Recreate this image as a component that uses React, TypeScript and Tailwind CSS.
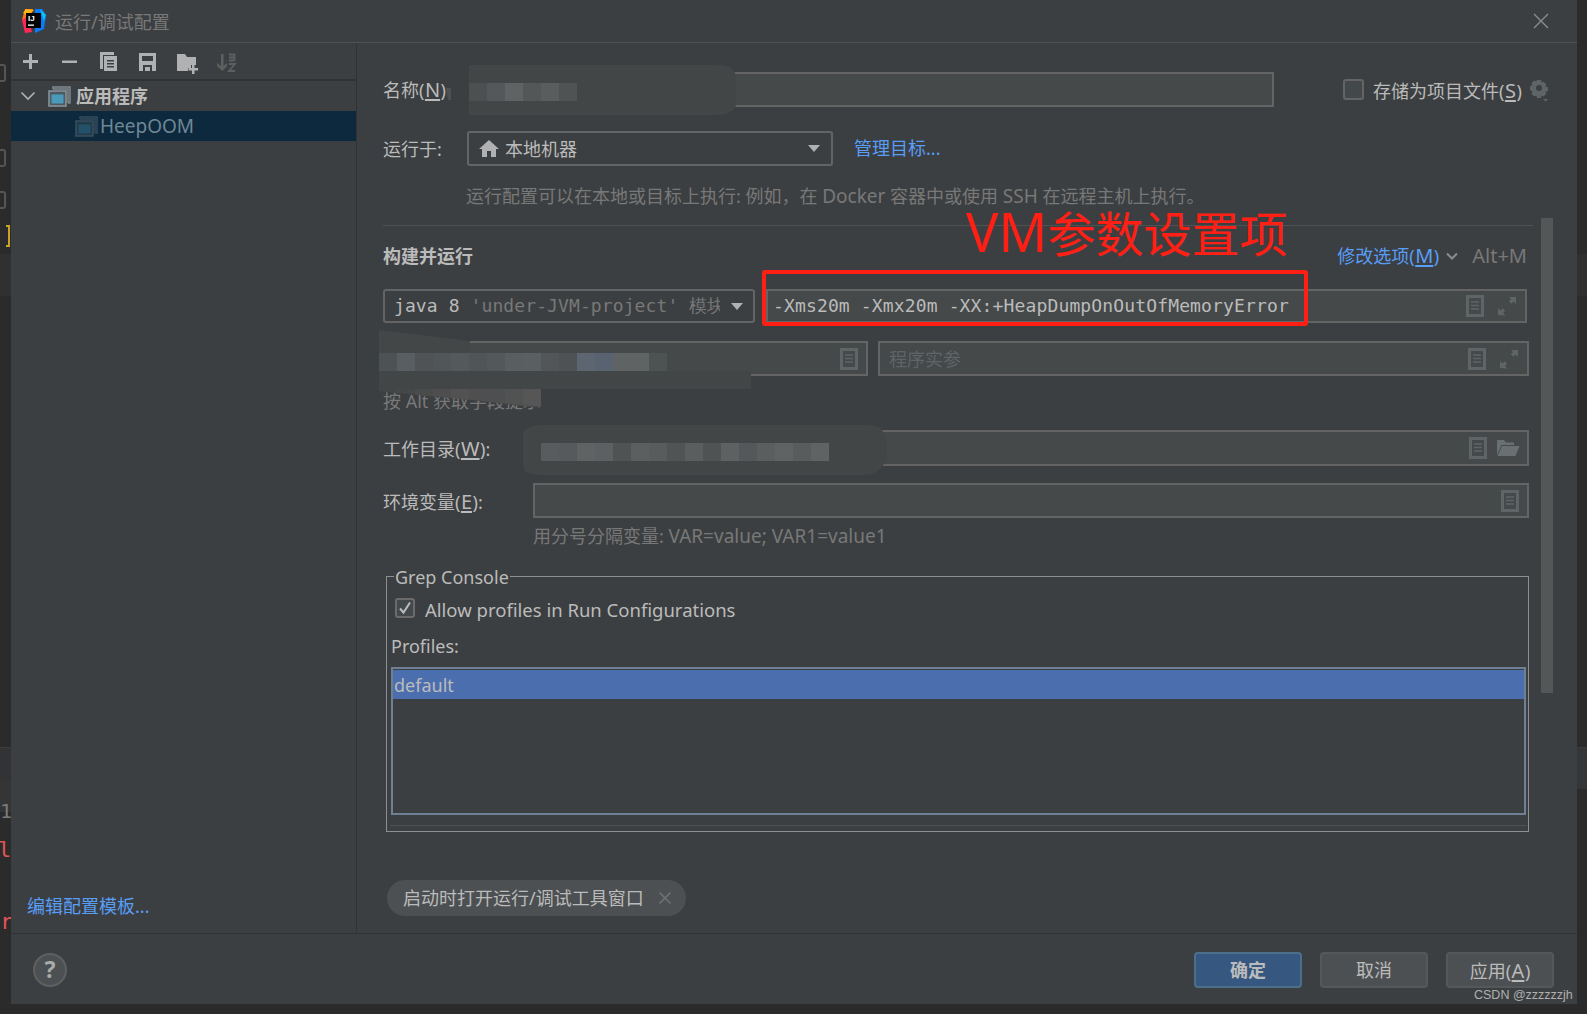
import type { ReactNode } from 'react'

const DocIcon = () => (
  <svg width="18" height="22" viewBox="0 0 18 22" className="shrink-0">
    <rect x="1.5" y="1.5" width="15" height="19" fill="none" stroke="#5f6567" strokeWidth="3" />
    <path d="M5 7h8M5 10.5h8M5 14h8" stroke="#5f6567" strokeWidth="1.5" />
  </svg>
)

const ExpandIcon = () => (
  <svg width="20" height="20" viewBox="0 0 20 20" className="shrink-0">
    <path d="M12 1h7v7l-2.5-2.5-2.2 2.2-2.5-2.5 2.2-2.2zM1 19v-7l2.5 2.5 2.2-2.2 2.5 2.5-2.2 2.2 2.5 2.5z" fill="#5f6567" />
  </svg>
)

const FolderOpenIcon = () => (
  <svg width="24" height="18" viewBox="0 0 24 18" className="shrink-0">
    <path d="M1 16V1h7l2 2.5h8V6H5.5zM6 7h17.500l-4 10H1.500z" fill="#687072" />
  </svg>
)

const Triangle = () => (
  <svg width="14" height="9" viewBox="0 0 14 9" className="shrink-0">
    <path d="M1 1h12L7 8z" fill="#afb1b3" />
  </svg>
)

const AppIcon = ({ dim }: { dim?: boolean }) => (
  <svg width="23" height="21" viewBox="0 0 23 21" className="shrink-0">
    <g opacity={dim ? 0.35 : 1}>
      <path d="M5 3V1h17v16h-2M5 3h15v14" fill="none" stroke="#7f8b91" strokeWidth="1.500" />
      <rect x="1" y="5" width="17" height="15" fill="#4d5a60" stroke="#8a979e" strokeWidth="1.500" />
      <rect x="3.500" y="8.500" width="12" height="9" fill="#4a9bbb" />
    </g>
  </svg>
)

const toolIcons: ReactNode[] = [
  <path key="add" d="M8 2h3v6h6v3h-6v6H8v-6H2V8h6z" fill="#afb1b3" />,
  <path key="remove" d="M2 8.500h15v2.500H2z" fill="#afb1b3" />,
  <path key="copy" fillRule="evenodd" d="M1 0h14v3H4v14H1zM5 4h13v15H5zM8 8v1.500h7V8zm0 3v1.500h7V11zm0 3v1.500h7V14z" fill="#afb1b3" />,
  <path key="save" fillRule="evenodd" d="M1 1h17v18H1zM4 4v5h11V4zm1 9v6h9v-6zm2 2h5v4H7z" fill="#afb1b3" />,
  <path key="folder" d="M0 2h8l2 3h9v8h-5v3h-3v3H0zM15 13h2.500v3H21v2.500h-3.500V22H15v-3.500h-3.500V16H15z" fill="#afb1b3" />,
]

const Toolbar = () => (
  <div className="flex h-[38px] items-center border-b-2 border-[#323232] pt-[3px] pl-px">
    {toolIcons.map((icon, i) => (
      <div key={i} className="flex w-[39px] justify-center">
        <svg width="21" height="22" viewBox="0 0 21 22">
          {icon}
        </svg>
      </div>
    ))}
    <div className="flex w-[39px] justify-center">
      <svg width="21" height="22" viewBox="0 0 21 22">
        <path d="M5 2h2.500v12L11 11v3l-4.700 5L1 14v-3l4 3z" fill="#5e6060" />
        <path d="M13 2.500h5.500v6M13 5.500h5.500M13 8.500h5.500M13 12h6l-6 7h6" fill="none" stroke="#5e6060" strokeWidth="1.800" />
      </svg>
    </div>
  </div>
)

const Sidebar = () => (
  <div className="flex w-[346px] shrink-0 flex-col border-r border-[#323232]">
    <Toolbar />
    <div className="flex h-[30px] items-center">
      <svg width="16" height="10" viewBox="0 0 16 10" className="ml-[9px]">
        <path d="M1.500 1.500L8 8l6.500-6.500" fill="none" stroke="#afb1b3" strokeWidth="1.600" />
      </svg>
      <div className="ml-[12px]">
        <AppIcon />
      </div>
      <span className="ml-[5px] text-[18px] font-bold text-[#bbbbbb]">应用程序</span>
    </div>
    <div className="flex h-[30px] items-center bg-[#0d293e] pl-[64px]">
      <AppIcon dim />
      <span className="ml-[2px] text-[19px] text-[#6f8795]">HeepOOM</span>
    </div>
    <a className="mt-auto mb-[13px] ml-[16px] text-[18px] text-[#589df6]">编辑配置模板...</a>
  </div>
)

const Field = ({ className, children }: { className: string; children?: ReactNode }) => (
  <div className={`flex items-center border-2 border-[#646464] bg-[#45494a] ${className}`}>{children}</div>
)

const Underlined = ({ before, letter, after }: { before: string; letter: string; after: string }) => (
  <>
    {before}
    <span className="px-[0.5px] text-[20px] underline underline-offset-2">{letter}</span>
    {after}
  </>
)

const Main = () => (
  <div className="relative flex min-w-0 flex-1 flex-col pr-[48px] pl-[26px] text-[18px] leading-[24px] text-[#bbbbbb]">
    <div className="mt-[29px] -mr-[19px] flex h-[35px] items-center">
      <span className="w-[86px] shrink-0">
        <Underlined before="名称(" letter="N" after=")" />
      </span>
      <Field className="h-full w-[805px] shrink-0" />
      <div className="ml-[69px] h-[21px] w-[21px] shrink-0 rounded-[3px] border-2 border-[#646464] bg-[#43494a]" />
      <span className="ml-[9px] pt-[2px] whitespace-nowrap">
        <Underlined before="存储为项目文件(" letter="S" after=")" />
      </span>
      <svg width="20" height="24" viewBox="0 0 20 24" className="ml-[7px] shrink-0">
        <path
          fillRule="evenodd"
          d="M8 2h4l.6 2.600 2-.9 2.800 2.800-1 2 2.600.7v3.800l-2.600.7 1 2-2.800 2.800-2-1-.6 2.500H8l-.7-2.500-2 1-2.800-2.800 1-2L1 11.800V8l2.500-.7-1-2 2.800-2.800 2 .9zM10 7a3 3 0 1 0 0 6 3 3 0 0 0 0-6z"
          fill="#5f6567"
        />
        <path d="M14 21h5l-2.500 2.500z" fill="#5f6567" />
      </svg>
    </div>

    <div className="mt-[24px] flex h-[35px] items-center">
      <span className="w-[84px] shrink-0">运行于:</span>
      <div className="flex h-full w-[366px] items-center rounded-[3px] border-2 border-[#646464] pr-[10px] pl-[10px]">
        <svg width="20" height="18" viewBox="0 0 20 18">
          <path d="M10 0l10 9h-3v8h-5v-6H8v6H3V9H0z" fill="#afb1b3" />
        </svg>
        <span className="ml-[6px] flex-1">本地机器</span>
        <Triangle />
      </div>
      <a className="-mt-[2px] ml-[21px] text-[#589df6]">管理目标...</a>
    </div>

    <p className="mt-[18px] mb-px pl-[83px] whitespace-nowrap text-[#787878]">
      运行配置可以在本地或目标上执行: 例如，在 <span className="text-[19px]">Docker</span> 容器中或使用{' '}
      <span className="text-[19px]">SSH</span> 在远程主机上执行。
    </p>

    <div className="mt-[16px] mr-[-4px] h-px bg-[#515151]" />

    <div className="mt-[18px] mb-px flex items-center pr-[2px]">
      <span className="flex-1 font-bold">构建并运行</span>
      <a className="text-[#589df6]">
        <Underlined before="修改选项(" letter="M" after=")" />
      </a>
      <svg width="14" height="9" viewBox="0 0 14 9" className="ml-[6px]">
        <path d="M2 1.500L7 6.500l5-5" fill="none" stroke="#8a8c8e" strokeWidth="2" />
      </svg>
      <span className="ml-[13px] text-[20px] text-[#787878]">Alt+M</span>
    </div>

    <div className="mt-[20px] flex h-[34px] pr-[2px] font-['DejaVu_Sans_Mono',monospace]">
      <div className="flex h-full w-[372px] shrink-0 items-center rounded-[3px] border-2 border-[#646464] pr-[9px] pl-[9px]">
        <span className="min-w-0 flex-1 overflow-hidden tracking-[0.1px] whitespace-nowrap">
          java 8 <span className="text-[#787878]">'under-JVM-project' 模块</span>
        </span>
        <div className="ml-[10px]">
          <Triangle />
        </div>
      </div>
      <Field className="ml-[11px] h-full flex-1 pr-[8px] pl-[5px]">
        <span className="flex-1 tracking-[0.14px] whitespace-nowrap">-Xms20m -Xmx20m -XX:+HeapDumpOnOutOfMemoryError</span>
        <DocIcon />
        <div className="ml-[13px]">
          <ExpandIcon />
        </div>
      </Field>
    </div>

    <div className="mt-[18px] flex h-[35px] gap-[10px]">
      <Field className="h-full w-[485px] justify-end pr-[8px]">
        <DocIcon />
      </Field>
      <Field className="h-full flex-1 pr-[8px] pl-[9px]">
        <span className="flex-1 text-[#5f6567]">程序实参</span>
        <DocIcon />
        <div className="ml-[13px]">
          <ExpandIcon />
        </div>
      </Field>
    </div>

    <p className="mt-[13px] text-[#787878]">按 Alt 获取字段提示</p>

    <div className="mt-[17px] flex h-[36px] items-center">
      <span className="w-[150px] shrink-0 pt-[2px]">
        <Underlined before="工作目录(" letter="W" after="):" />
      </span>
      <Field className="h-full flex-1 justify-end pr-[7px]">
        <DocIcon />
        <div className="ml-[9px]">
          <FolderOpenIcon />
        </div>
      </Field>
    </div>

    <div className="mt-[17px] flex h-[35px] items-center">
      <span className="w-[150px] shrink-0 pt-[2px]">
        <Underlined before="环境变量(" letter="E" after="):" />
      </span>
      <Field className="h-full flex-1 justify-end pr-[8px]">
        <DocIcon />
      </Field>
    </div>

    <p className="mt-[6px] pl-[150px] text-[#787878]">
      用分号分隔变量: <span className="text-[19px]">VAR=value; VAR1=value1</span>
    </p>

    <div className="relative mt-[28px] ml-[3px] h-[256px] border border-[#8c9092] pt-[21px] pl-[8px]">
      <span className="absolute -top-[12px] left-[7px] bg-[#3c3f41] px-[1px]">Grep Console</span>
      <div className="flex h-[20px] items-center">
        <div className="flex h-[20px] w-[20px] items-center justify-center rounded-[3px] border-2 border-[#6b6b6b] bg-[#43494a]">
          <svg width="14" height="14" viewBox="0 0 14 14">
            <path d="M2 7.500L5.500 11.500 12 1.500" fill="none" stroke="#bbbbbb" strokeWidth="2" />
          </svg>
        </div>
        <span className="ml-[10px] pt-[3px] text-[18.5px]">Allow profiles in Run Configurations</span>
      </div>
      <p className="mt-[16px] -ml-[4px]">Profiles:</p>
      <div className="mt-[9px] mr-[2px] -ml-[4px] h-[148px] border-2 border-[#6f8094] pt-px">
        <div className="flex h-[29px] items-center bg-[#4b6eaf] pl-px">default</div>
      </div>
      <div className="mt-[10px] mr-px -ml-[5px] h-px bg-[#515151]" />
    </div>

    <div className="mt-[48px] ml-[4px] flex h-[36px] w-[299px] items-center rounded-full bg-[#4c5052] pl-[16px]">
      <span className="whitespace-nowrap">启动时打开运行/调试工具窗口</span>
      <svg width="14" height="14" viewBox="0 0 14 14" className="ml-[14px]">
        <path d="M1.500 1.500l11 11M12.500 1.500l-11 11" stroke="#6e7274" strokeWidth="1.600" />
      </svg>
    </div>

    <div className="absolute top-[175px] right-[24px] h-[475px] w-[12px] bg-[#545658]" />
  </div>
)

const FooterButton = ({ primary, children }: { primary?: boolean; children: ReactNode }) => (
  <button
    className={`h-[36px] w-[108px] rounded-[4px] border-2 pt-[2px] text-[18px] ${
      primary ? 'border-[#4c708c] bg-[#365880] font-bold text-[#bbbbbb]' : 'border-[#555859] bg-[#4c5052] text-[#bbbbbb]'
    }`}
  >
    {children}
  </button>
)

const Footer = () => (
  <div className="flex h-[71px] shrink-0 items-center border-t border-[#323232] pt-px pr-[23px] pl-[22px]">
    <div className="flex h-[34px] w-[34px] items-center justify-center rounded-full border-2 border-[#5e6060] bg-[#4c5052] text-[23px] font-bold text-[#a9abad]">
      ?
    </div>
    <div className="ml-auto flex gap-[18px]">
      <FooterButton primary>确定</FooterButton>
      <FooterButton>取消</FooterButton>
      <FooterButton>
        <Underlined before="应用(" letter="A" after=")" />
      </FooterButton>
    </div>
  </div>
)

const Logo = () => (
  <svg width="26" height="26" viewBox="0 0 26 26" className="shrink-0">
    <path d="M4 1h8l-3 8-8 3z" fill="#f97a12" />
    <path d="M2 5l3-4 8 1-6 6z" fill="#fcb515" />
    <path d="M1 12l6-4 4 16-7 1z" fill="#fe2857" />
    <path d="M14 1l7 0 4 6-2 14-9 4z" fill="#087cfa" />
    <path d="M19 1l6 6-2 6z" fill="#07c3f2" />
    <rect x="5" y="5" width="15" height="15" fill="#000000" />
    <text x="7" y="12.500" fontSize="8" fontWeight="700" fill="#ffffff" fontFamily="'Liberation Sans', sans-serif">
      IJ
    </text>
    <rect x="7" y="16.500" width="6" height="1.300" fill="#ffffff" />
  </svg>
)

const Dialog = () => (
  <div className="flex min-w-0 flex-1 flex-col bg-[#3c3f41]">
    <div className="flex h-[43px] shrink-0 items-center border-b border-[#515151] pr-[28px] pl-[10px]">
      <Logo />
      <span className="ml-[8px] flex-1 pt-[2px] text-[18px] text-[#787878]">运行/调试配置</span>
      <svg width="16" height="16" viewBox="0 0 16 16">
        <path d="M1 1l14 14M15 1L1 15" stroke="#8a8c8e" strokeWidth="1.400" />
      </svg>
    </div>
    <div className="flex min-h-0 flex-1">
      <Sidebar />
      <Main />
    </div>
    <Footer />
  </div>
)

// strips of the editor that show behind the dialog
const LeftStrip = () => (
  <div className="relative flex w-[11px] shrink-0 flex-col text-[#7a7a7a]">
    <div className="h-[254px]" />
    <div className="h-[42px] bg-[#303030]" />
    <div className="h-[451px]" />
    <div className="h-[33px] border-t border-[#3d3d3d] bg-[#313335]" />
    <div className="h-[32px] bg-[#353535]" />
    <div className="absolute top-[64px] left-0 h-[18px] w-[6px] rounded-r-[3px] border-2 border-l-0 border-[#555555]" />
    <div className="absolute top-[149px] left-0 h-[18px] w-[6px] rounded-r-[3px] border-2 border-l-0 border-[#555555]" />
    <div className="absolute top-[191px] left-0 h-[18px] w-[6px] rounded-r-[3px] border-2 border-l-0 border-[#555555]" />
    <div className="absolute top-[225px] left-[6px] h-[22px] w-[4px] border-y-2 border-r-2 border-[#c9a227]" />
    <span className="absolute top-[798px] left-0 font-['DejaVu_Sans_Mono',monospace] text-[20px] leading-[26px]">1</span>
    <span className="absolute top-[836px] -left-[2px] font-['DejaVu_Sans_Mono',monospace] text-[22px] leading-[28px] text-[#e05555]">l</span>
    <span className="absolute top-[908px] left-0 w-[11px] overflow-hidden font-['DejaVu_Sans_Mono',monospace] text-[22px] leading-[28px] text-[#e05555]">r</span>
  </div>
)

const RightStrip = () => (
  <div className="flex w-[10px] shrink-0 flex-col">
    <div className="h-[254px]" />
    <div className="h-[42px] bg-[#303030]" />
    <div className="h-[451px]" />
    <div className="h-[42px] border-t border-[#3d3d3d] bg-[#343638]" />
  </div>
)

const nameBar = ['#4c5051', '#54585a', '#5f6364', '#535758', '#595d5e', '#4f5354']
const mainBar = ['#4d5254', '#585e61', '#4f5355', '#515658', '#54595b', '#505557', '#53585a', '#595e60', '#5a5f62', '#525658', '#4e5254', '#5d6570', '#586270', '#5f6364', '#5f6364', '#4d5253']
const dirBar = ['#585c5e', '#565a5c', '#5f6364', '#5c6062', '#4f5354', '#5b5f60', '#585c5d', '#505455', '#5a5e5f', '#4f5354', '#5d6162', '#54585a', '#5a5e5f', '#5f6364', '#585c5d', '#5f6364']
const altBar = ['#434546', '#464747', '#4a4b4b', '#4e4e4e', '#525252', '#4f4f4f', '#4d4f50', '#515252', '#565656']

// censored paths painted over the form, as in the screenshot
const Smudges = () => (
  <svg width="1587" height="1014" className="pointer-events-none absolute inset-0">
    <path d="M446 88h5v12h-3z" fill="#4d5152" />
    <path d="M469 65h250q17 0 17 14v24q0 12-20 12H469z" fill="#424647" />
    {nameBar.map((c, i) => (
      <rect key={i} x={469 + i * 18} y={83} width={18} height={18} fill={c} />
    ))}
    <path d="M379 330l91 11v12H379z" fill="#434748" />
    <rect x={379} y={371} width={372} height={18} fill="#424647" />
    <path d="M379 389h162v18h-10z" fill="#4a4c4c" />
    {altBar.map((c, i) => (
      <path key={i} d={`M${379 + i * 18} 389h18v${4 + i * 1.700}l-18-1.700z`} fill={c} />
    ))}
    {mainBar.map((c, i) => (
      <rect key={i} x={379 + i * 18} y={353} width={18} height={18} fill={c} />
    ))}
    <path d="M523 432q6-7 18-7h330q12 0 16 16v16q-6 18-24 18H541q-18 0-18-10z" fill="#424647" />
    {dirBar.map((c, i) => (
      <rect key={i} x={541 + i * 18} y={443} width={18} height={18} fill={c} />
    ))}
  </svg>
)

export default function App() {
  return (
    <div className="relative h-[1014px] w-[1587px] overflow-hidden bg-[#2b2b2b] font-['Noto_Sans','Noto_Sans_CJK_SC',sans-serif]">
      <div className="flex h-[1004px]">
        <LeftStrip />
        <Dialog />
        <RightStrip />
      </div>
      <Smudges />
      <div className="absolute top-[270px] left-[762px] h-[56px] w-[546px] rounded-[3px] border-[4px] border-[#ff1f14]" />
      <span className="absolute top-[198px] left-[966px] text-[48px] leading-[66px] whitespace-nowrap text-[#ff1f14]">
        <span className="text-[54px]">VM</span>参数设置项
      </span>
      <span className="absolute top-[986px] left-[1474px] font-['Liberation_Sans',sans-serif] text-[12.5px] leading-[19px] whitespace-nowrap text-[#b0b0b0]">
        CSDN @zzzzzzjh
      </span>
    </div>
  )
}
